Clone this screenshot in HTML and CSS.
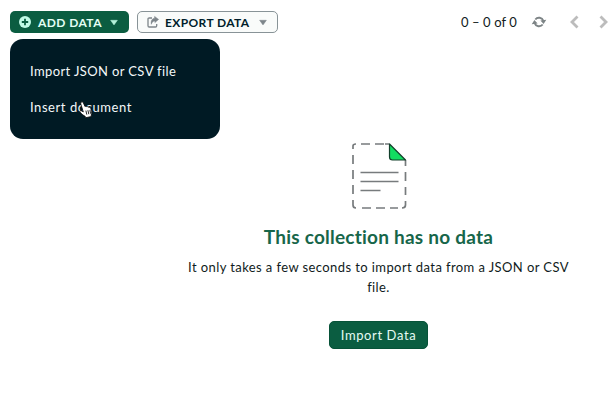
FILE: index.html
```html
<!DOCTYPE html>
<html lang="en">
<head>
<meta charset="utf-8">
<title>Collection documents</title>
<link rel="stylesheet" href="styles.css">
</head>
<body>
<header class="toolbar">
  <div class="dropdown">
    <button class="button button-add">
      <svg class="icon-plus" viewBox="0 0 12 12"><circle cx="6" cy="6" r="6" fill="#c0fae6"/><path d="M6 2.800v6.400M2.800 6h6.400" stroke="#0b5d41" stroke-width="1.800"/></svg>
      <span class="label-add">ADD DATA</span>
      <svg class="caret" viewBox="0 0 8 5"><path d="M.6.3h6.800L4 4.900z" fill="#b5f2da" stroke="#b5f2da" stroke-width=".5" stroke-linejoin="round"/></svg>
    </button>
    <div class="menu">
      <div class="menu-item"><span class="label-import">Import JSON or CSV file</span></div>
      <div class="menu-item"><span class="label-insert">Insert document</span></div>
      <svg class="cursor" viewBox="0 0 14 17"><path d="M2.200 1.200c.9-.7 1.800-.2 2.200.7L6 5.600c.6-.6 1.600-.4 1.900.3.7-.5 1.600-.3 1.900.5.9-.4 1.800.1 2 1l.8 3.200c.3 1.300.1 2.400-.4 3.500l.2 1.400-5.500 1.200-.8-1.400C4.500 14.600 3 13 1 11.300c-.9-.8.3-2 1.500-1.400l1.800 1L1.800 3c-.3-.8-.1-1.400.4-1.800z" fill="#fff" stroke="#000" stroke-width=".8"/><path d="M6.900 9.600l.9 4M8.900 9.200l.9 4M10.900 8.900l.7 3.800" stroke="#111" stroke-width=".9"/></svg>
    </div>
  </div>
  <button class="button button-export">
    <svg class="icon-export" viewBox="0 0 12 12"><path d="M5 2H2.200Q1 2 1 3.200v6.600Q1 11 2.200 11h6.300q1.200 0 1.200-1.200V8" fill="none" stroke="#7d858a" stroke-width="1.300"/><path d="M7.600.4L11.600 3.400 7.900 6.600V4.900C6 5 5 6 4.300 8.300 3.600 5 5 2.500 7.600 2.200z" fill="#7d858a" stroke="#7d858a" stroke-width=".5"/></svg>
    <span class="label-export">EXPORT DATA</span>
    <svg class="caret" viewBox="0 0 8 5"><path d="M.6.3h6.800L4 4.900z" fill="#7d858a" stroke="#7d858a" stroke-width=".5" stroke-linejoin="round"/></svg>
  </button>
  <div class="pager">
    <span class="label-count">0 – 0 of 0</span>
    <svg class="icon-refresh" viewBox="0 0 14 12"><path d="M3.300 3.500A4.700 4.700 0 0 1 11.400 4.800M10.700 8.500A4.700 4.700 0 0 1 2.600 7.200" fill="none" stroke="#7d8486" stroke-width="1.900"/><path d="M8.400 4.400L14.300 3.800 11.600 7.900zM5.600 7.600L-.3 8.200 2.400 4.100z" fill="#7d8486"/></svg>
    <svg class="icon-prev" viewBox="0 0 9 14"><path d="M7.500 1.500L2 7l5.500 5.500" fill="none" stroke="#bcbcbc" stroke-width="2.800"/></svg>
    <svg class="icon-next" viewBox="0 0 9 14"><path d="M1.500 1.500L7 7l-5.500 5.500" fill="none" stroke="#bcbcbc" stroke-width="2.800"/></svg>
  </div>
</header>
<main class="empty">
  <svg class="illustration" viewBox="0 0 56 68"><g fill="none" stroke="#777b7d" stroke-width="1.700"><path d="M2 7V4q0-2 3-2M10 2h9M24 2h9M34 2h4M2 13v9M2 28v9M2 43v9M2 58v5q0 3 3 3M11 66h9M25 66h9M39 66h8M51 66q3.500 0 3.500-3v-4M54.500 18v6M54.500 30v9M54.500 45v8"/><path d="M9.500 30.500H47.500M9.500 39.500H47.500M9.500 48.500H29.500" stroke-width="1.700"/></g><path d="M38.500 2v13q0 3 3 3h13z" fill="#13dc61" stroke="#123f2b" stroke-width="1.200" stroke-linejoin="round"/></svg>
  <h1 class="title"><span class="label-title">This collection has no data</span></h1>
  <p class="description">It only takes a few seconds to import data from a JSON or CSV<br>file.</p>
  <button class="button-import"><span class="label-cta">Import Data</span></button>
</main>
</body>
</html>
```
FILE: styles.css
```css
* { box-sizing: border-box; }
body {
  margin: 0;
  background: #fff;
  color: #101b21;
  font-family: Lato, "Liberation Sans", sans-serif;
  font-size: 13px;
}
svg { display: block; flex: none; overflow: visible; }
button { font: inherit; margin: 0; }
span { white-space: nowrap; }
.toolbar { display: flex; align-items: center; height: 44px; padding: 0 8px 0 10px; gap: 8px; }
.dropdown { position: relative; }
.button { display: flex; align-items: center; height: 22px; border-radius: 5px; font-weight: 700; font-size: 12px; }
.button-add { width: 119px; padding: 0 11px 0 9px; background: #0b5d41; border: 0; color: #e4fff5; }
.button-export { width: 141px; padding: 0 10px 0 9px; background: #f9fbfa; border: 1px solid #889397; color: #001e2b; }
.icon-plus { width: 12px; height: 12px; margin-right: 7px; }
.icon-export { width: 12px; height: 12px; margin-right: 6px; }
.caret { width: 8px; height: 5px; margin-left: auto; }
.menu {
  position: absolute;
  top: 28px;
  left: 0;
  width: 210px;
  height: 100px;
  padding: 14px 20px;
  border-radius: 13px;
  background: #001a24;
  color: #f3f8f9;
}
.menu-item { height: 36px; line-height: 36px; }
.cursor { position: absolute; left: 69px; top: 62px; width: 14px; height: 17px; }
.pager { display: flex; align-items: center; margin-left: auto; }
.icon-refresh { width: 14px; height: 12px; margin-left: 15px; }
.icon-prev { width: 9px; height: 14px; margin-left: 24px; }
.icon-next { width: 9px; height: 14px; margin-left: 20px; }
.empty { display: flex; flex-direction: column; align-items: center; width: 400px; margin: 98px 0 0 178.500px; text-align: center; }
.illustration { width: 56px; height: 68px; margin-left: 1px; }
.title { margin: 15px 0 0; font-size: 19px; line-height: 24px; color: #17664a; letter-spacing: .23px; }
.description { margin: 8px 0 0; line-height: 20px; white-space: nowrap; letter-spacing: .41px; }
.button-import { width: 99px; height: 28px; margin: 24px 1px 0 0; padding: 0 0 0 1px; border: 1px solid #075238; border-radius: 5px; background: #0b5d41; color: #e5fbf3; }
.label-add { letter-spacing: .42px; }
.label-export { letter-spacing: .38px; }
.label-import { letter-spacing: .38px; }
.label-insert { letter-spacing: .56px; }
.label-cta { letter-spacing: .6px; }
.label-count { letter-spacing: .1px; }
```
